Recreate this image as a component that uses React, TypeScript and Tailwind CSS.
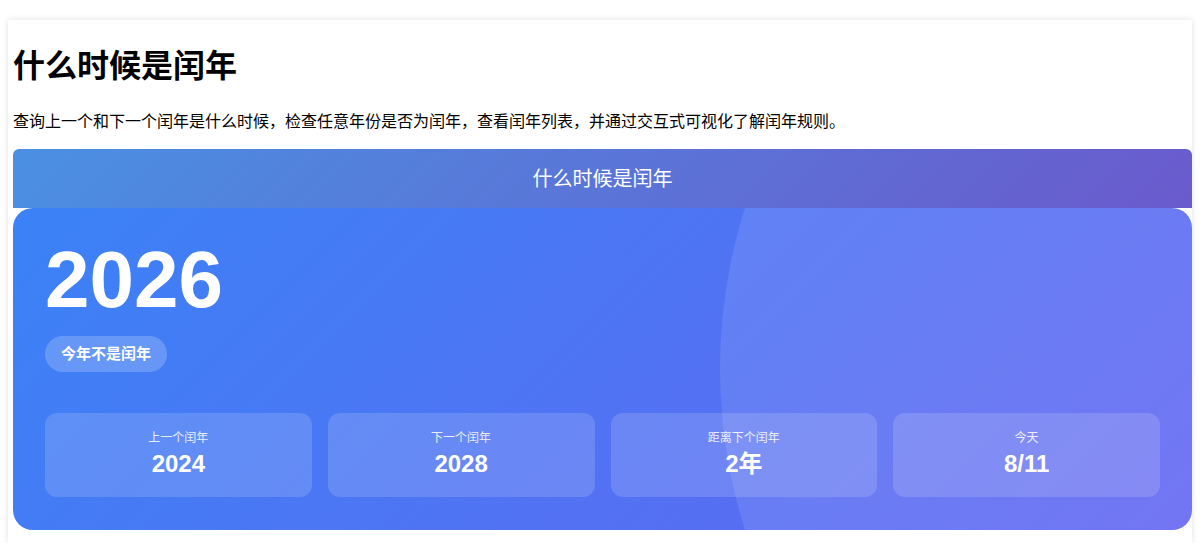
const stats = [
  { label: '上一个闰年', value: '2024' },
  { label: '下一个闰年', value: '2028' },
  { label: '距离下个闰年', value: '2年' },
  { label: '今天', value: '8/11' },
];

export default function App() {
  return (
    <div
      className="min-h-screen bg-white px-2 pt-5"
      style={{ fontFamily: '"Liberation Sans", "Noto Sans CJK SC", sans-serif' }}
    >
      <div className="bg-white pl-[5px] pb-[13px] shadow-[0_0_6px_rgba(0,0,0,0.12)]">
        <h1 className="pt-[26px] text-[32px] font-bold leading-[40px] text-black">什么时候是闰年</h1>
        <p className="mt-[24px] text-base leading-6 text-black">
          查询上一个和下一个闰年是什么时候，检查任意年份是否为闰年，查看闰年列表，并通过交互式可视化了解闰年规则。
        </p>

        <div className="mt-[15px] flex h-[59px] items-center justify-center rounded-t-md bg-[linear-gradient(135deg,#4a90e2,#6a5acd)] text-xl text-white">
          什么时候是闰年
        </div>

        <div className="relative overflow-hidden rounded-[20px] bg-[linear-gradient(135deg,#3b82f6,#6366f1)] px-8 pt-[32px] pb-[33px] text-white">
          <div className="pointer-events-none absolute left-[707px] top-[-370px] h-[1062px] w-[1062px] rounded-full bg-white/10" />
          <div className="relative">
            <div className="text-[80px] font-bold leading-[80px]">2026</div>
            <div className="mt-[16px] inline-flex h-9 items-center rounded-full bg-white/20 px-4 text-[15px] font-bold">
              今年不是闰年
            </div>
            <div className="mt-[41px] grid grid-cols-4 gap-4">
              {stats.map((s) => (
                <div
                  key={s.label}
                  className="flex h-[84px] flex-col items-center justify-center rounded-xl bg-white/15"
                >
                  <div className="text-xs leading-4 text-white/85">{s.label}</div>
                  <div className="mt-[2px] text-2xl font-bold leading-8">{s.value}</div>
                </div>
              ))}
            </div>
          </div>
        </div>
      </div>
    </div>
  );
}
